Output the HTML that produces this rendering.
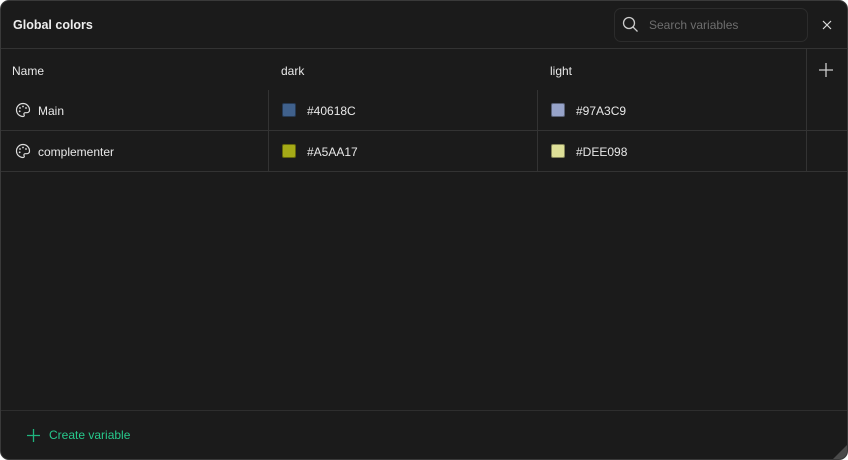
<!DOCTYPE html>
<html><head><style>
*{margin:0;padding:0;box-sizing:border-box}
body{width:848px;height:460px;background:#fff;font-family:"Liberation Sans",sans-serif;overflow:hidden}
.win{position:absolute;left:0;top:0;width:848px;height:460px;background:#1b1b1b;border:1px solid #3a3a3a;border-radius:9px;overflow:hidden;color:#e8e8e8;font-size:12px}
.hl{position:absolute;left:0;right:0;height:1px;background:#333}
.vl{position:absolute;width:1px;background:#333}
.t{position:absolute;white-space:nowrap}
.sw{position:absolute;width:14px;height:14px;border-radius:2px;border:1px solid rgba(0,0,0,.4)}
</style></head><body>
<div class="win">
<div class="t" style="left:12px;top:17px;font-size:12.5px;font-weight:bold;color:#eee">Global colors</div>
<div style="position:absolute;left:613px;top:7px;width:194px;height:34px;border:1px solid #2c2c2c;border-radius:7px"></div>
<svg style="position:absolute;left:621px;top:15px" width="17" height="17" viewBox="0 0 17 17"><circle cx="7" cy="7" r="5.5" fill="none" stroke="#ccc" stroke-width="1.3"/><path d="M11 11l4.5 4.5" stroke="#ccc" stroke-width="1.3"/></svg>
<div class="t" style="left:648px;top:17px;color:#6e6e6e">Search variables</div>
<svg style="position:absolute;left:821px;top:19px" width="10" height="10" viewBox="0 0 10 10"><path d="M1 1l8 8M9 1l-8 8" stroke="#ddd" stroke-width="1.2"/></svg>
<div class="hl" style="top:47px"></div>
<div class="t" style="left:11px;top:63px">Name</div>
<div class="t" style="left:280px;top:63px">dark</div>
<div class="t" style="left:549px;top:63px">light</div>
<svg style="position:absolute;left:818px;top:62px" width="14" height="14" viewBox="0 0 14 14"><path d="M7 0v14M0 7h14" stroke="#ccc" stroke-width="1.3"/></svg>
<div class="vl" style="left:805px;top:48px;height:122px"></div>
<div class="vl" style="left:267px;top:89px;height:81px"></div>
<div class="vl" style="left:536px;top:89px;height:81px"></div>
<div class="hl" style="top:129px"></div>
<div class="hl" style="top:170px"></div>
<svg style="position:absolute;left:14px;top:101px" width="16" height="16" viewBox="0 0 16 16"><path d="M8 1.5a6.5 6.5 0 1 0 0 13c1.2 0 1.6-1 1.1-1.8-.6-.9 0-2 1.1-2h1.8A2.5 2.5 0 0 0 14.5 8 6.5 6.5 0 0 0 8 1.5z" fill="none" stroke="#ddd" stroke-width="1.2"/><circle cx="5" cy="6" r=".9" fill="#ddd"/><circle cx="8" cy="4.5" r=".9" fill="#ddd"/><circle cx="11" cy="6" r=".9" fill="#ddd"/><circle cx="4.7" cy="9.3" r=".9" fill="#ddd"/></svg>
<div class="t" style="left:37px;top:103px">Main</div>
<svg style="position:absolute;left:14px;top:142px" width="16" height="16" viewBox="0 0 16 16"><path d="M8 1.5a6.5 6.5 0 1 0 0 13c1.2 0 1.6-1 1.1-1.8-.6-.9 0-2 1.1-2h1.8A2.5 2.5 0 0 0 14.5 8 6.5 6.5 0 0 0 8 1.5z" fill="none" stroke="#ddd" stroke-width="1.2"/><circle cx="5" cy="6" r=".9" fill="#ddd"/><circle cx="8" cy="4.5" r=".9" fill="#ddd"/><circle cx="11" cy="6" r=".9" fill="#ddd"/><circle cx="4.7" cy="9.3" r=".9" fill="#ddd"/></svg>
<div class="t" style="left:37px;top:144px">complementer</div>
<div class="sw" style="left:281px;top:102px;background:#40618C"></div>
<div class="t" style="left:306px;top:103px">#40618C</div>
<div class="sw" style="left:550px;top:102px;background:#97A3C9"></div>
<div class="t" style="left:575px;top:103px">#97A3C9</div>
<div class="sw" style="left:281px;top:143px;background:#A5AA17"></div>
<div class="t" style="left:306px;top:144px">#A5AA17</div>
<div class="sw" style="left:550px;top:143px;background:#DEE098"></div>
<div class="t" style="left:575px;top:144px">#DEE098</div>
<div class="hl" style="top:409px;background:#2e2e2e"></div>
<svg style="position:absolute;left:26px;top:428px" width="13" height="13" viewBox="0 0 13 13"><path d="M6.5 0v13M0 6.5h13" stroke="#1fb57e" stroke-width="1.3"/></svg>
<div class="t" style="left:48px;top:427px;color:#27c98c">Create variable</div>
<svg style="position:absolute;left:830px;top:442px" width="18" height="18"><path d="M18 0L0 18H18z" fill="#4a4a4a"/></svg>
</div>
</body></html>
